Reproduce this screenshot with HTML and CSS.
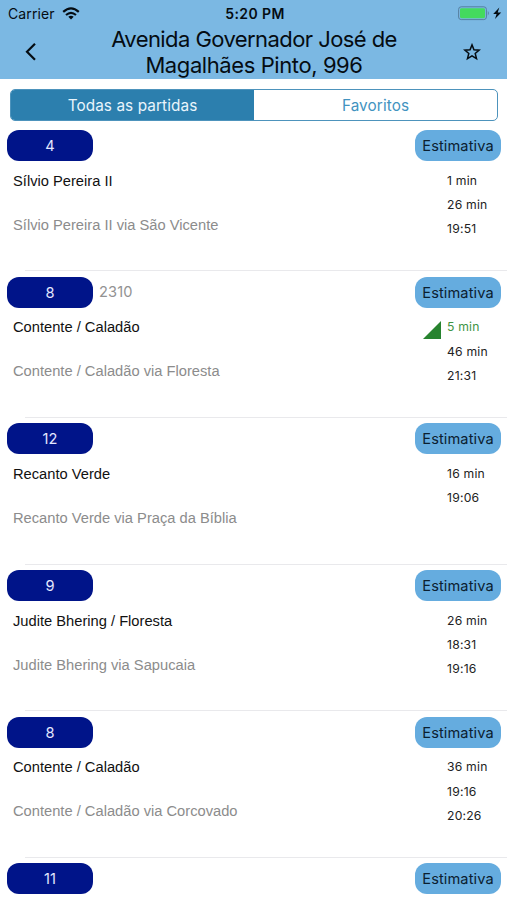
FILE: index.html
```html
<!DOCTYPE html>
<html lang="pt-BR">
<head>
<meta charset="utf-8">
<title>Partidas</title>
<link rel="stylesheet" href="styles.css">
</head>
<body>
<header class="header">
  <div class="status">
    <div class="status-left"><span>Carrier</span>
      <svg class="wifi" viewBox="0 0 18 13" width="18" height="13"><path d="M1.2 4.9Q9-2.2 16.8 4.9" fill="none" stroke="#050c12" stroke-width="2.2"/><path d="M4 8Q9 3.6 14 8" fill="none" stroke="#050c12" stroke-width="2.1"/><path d="M6.3 9.7Q9 7.6 11.7 9.7L9 12.4Z" fill="#050c12"/></svg>
    </div>
    <div class="clock">5:20 PM</div>
    <div class="status-right">
      <svg viewBox="0 0 44 15" width="44" height="15"><rect x=".6" y=".8" width="27.8" height="12.8" rx="2.6" fill="none" stroke="#557f9f" stroke-width="1"/><rect x="2" y="2.2" width="25" height="10" rx="1.4" fill="#44da5e"/><path d="M29.8 5Q31.8 7.2 29.8 9.4Z" fill="#557f9f"/><path d="M41.3 1.6 35.2 8h3.4L37 13 43.2 6.4h-3.5Z" fill="#050c12"/></svg>
    </div>
  </div>
  <div class="nav">
    <svg class="back" viewBox="0 0 12 20" width="12" height="20"><path d="M10 1.8 2 9.8l8 8" fill="none" stroke="#050c12" stroke-width="2.2"/></svg>
    <h1 class="title"><span class="title-first">Avenida Governador José de</span><span class="title-second">Magalhães Pinto, 996</span></h1>
    <svg class="star" viewBox="0 0 18 18" width="18" height="18"><path d="m9 1.9 1.95 4.9 5.25.35-4 3.35 1.3 5.1L9 12.8l-4.5 2.8 1.3-5.1-4-3.35 5.25-.35Z" fill="none" stroke="#050c12" stroke-width="1.5"/></svg>
  </div>
</header>
<div class="tabs">
  <div class="tab active"><span>Todas as partidas</span></div>
  <div class="tab"><span>Favoritos</span></div>
</div>
<main class="list">
  <section class="row">
    <div class="top"><span class="line">4</span><span class="estimate">Estimativa</span></div>
    <div class="details"><div><div class="name">Sílvio Pereira II</div><div class="via">Sílvio Pereira II via São Vicente</div></div>
    <div class="times"><div>1 min</div><div>26 min</div><div>19:51</div></div></div>
  </section>
  <section class="row">
    <div class="top"><span class="line">8</span><span class="vehicle">2310</span><span class="estimate">Estimativa</span></div>
    <div class="details"><div><div class="name">Contente / Caladão</div><div class="via">Contente / Caladão via Floresta</div></div>
    <div class="times"><div class="live"><svg class="signal" viewBox="0 0 18 18" width="18" height="18"><path d="M18 0v18H0Z" fill="#27832f"/></svg>5 min</div><div>46 min</div><div>21:31</div></div></div>
  </section>
  <section class="row">
    <div class="top"><span class="line">12</span><span class="estimate">Estimativa</span></div>
    <div class="details"><div><div class="name">Recanto Verde</div><div class="via">Recanto Verde via Praça da Bíblia</div></div>
    <div class="times"><div>16 min</div><div>19:06</div></div></div>
  </section>
  <section class="row">
    <div class="top"><span class="line">9</span><span class="estimate">Estimativa</span></div>
    <div class="details"><div><div class="name">Judite Bhering / Floresta</div><div class="via">Judite Bhering via Sapucaia</div></div>
    <div class="times"><div>26 min</div><div>18:31</div><div>19:16</div></div></div>
  </section>
  <section class="row">
    <div class="top"><span class="line">8</span><span class="estimate">Estimativa</span></div>
    <div class="details"><div><div class="name">Contente / Caladão</div><div class="via">Contente / Caladão via Corcovado</div></div>
    <div class="times"><div>36 min</div><div>19:16</div><div>20:26</div></div></div>
  </section>
  <section class="row last">
    <div class="top"><span class="line">11</span><span class="estimate">Estimativa</span></div>
  </section>
</main>
</body>
</html>
```
FILE: styles.css
```css
* { box-sizing: border-box; }
body { margin: 0; height: 900px; overflow: hidden; display: flex; flex-direction: column; background: #fff; color: #111; font-family: Inter, "Liberation Sans", sans-serif; }
.header { flex: none; height: 79px; background: #7bb8e3; color: #050c12; }
.status { height: 26px; display: grid; grid-template-columns: 1fr auto 1fr; padding: 0 5px 0 8px; line-height: 27px; font-size: 14px; }
.status-left { display: flex; gap: 7px; letter-spacing: .1px; }
.wifi { margin-top: 7px; }
.clock { font-weight: 600; letter-spacing: .4px; }
.status-right { display: flex; justify-content: flex-end; padding-top: 6px; }
.nav { height: 53px; display: grid; grid-template-columns: 20px 1fr 18px; padding: 0 26px 0 25px; }
.back { margin-top: 16px; }
.title { margin: 0; font-size: 22px; font-weight: 400; line-height: 27px; text-align: center; white-space: nowrap; }
.title-first, .title-second { display: block; }
.title-first { letter-spacing: -.57px; line-height: 26px; }
.title-second { letter-spacing: -.41px; }
.star { margin-top: 17px; }
.tabs { flex: none; height: 32px; margin: 10px 9px 0 10px; display: flex; border: 1px solid #4d93bc; border-radius: 5px; overflow: hidden; }
.tab { flex: 1; text-align: center; line-height: 31px; font-size: 15.3px; color: #4293bf; letter-spacing: .1px; }
.active { background: #2c7fae; color: #e9f5fc; }
.list { flex: none; margin-top: 2.7px; }
.row { height: 146.67px; padding: 6.4px 6px 0 7px; background: linear-gradient(#e9e9ec, #e9e9ec) 25px 0 / 100% 1px no-repeat; }
.row:first-child { background: none; }
.row.last { height: 42px; }
.top { height: 31px; display: flex; align-items: center; line-height: 32px; font-size: 14.6px; }
.line { width: 86px; height: 31px; border-radius: 12px; background: #001489; color: #e4e8ff; text-align: center; }
.vehicle { margin-left: 6px; color: #929292; letter-spacing: .15px; }
.estimate { width: 86px; height: 31px; margin-left: auto; border-radius: 12px; background: #65acdf; color: #0b2030; text-align: center; letter-spacing: .1px; }
.details { display: flex; justify-content: space-between; padding: 7.6px 0 0 6px; font-family: "Liberation Sans", sans-serif; font-size: 14.7px; }
.name { line-height: 24px; }
.via { line-height: 24px; margin-top: 20px; color: #8c8c8c; }
.times { width: 54px; font-family: Inter, sans-serif; font-size: 12.2px; line-height: 24.4px; color: #222; white-space: nowrap; letter-spacing: .2px; }
.live { position: relative; color: #3f9444; }
.signal { position: absolute; left: -24px; top: 6px; }
```
